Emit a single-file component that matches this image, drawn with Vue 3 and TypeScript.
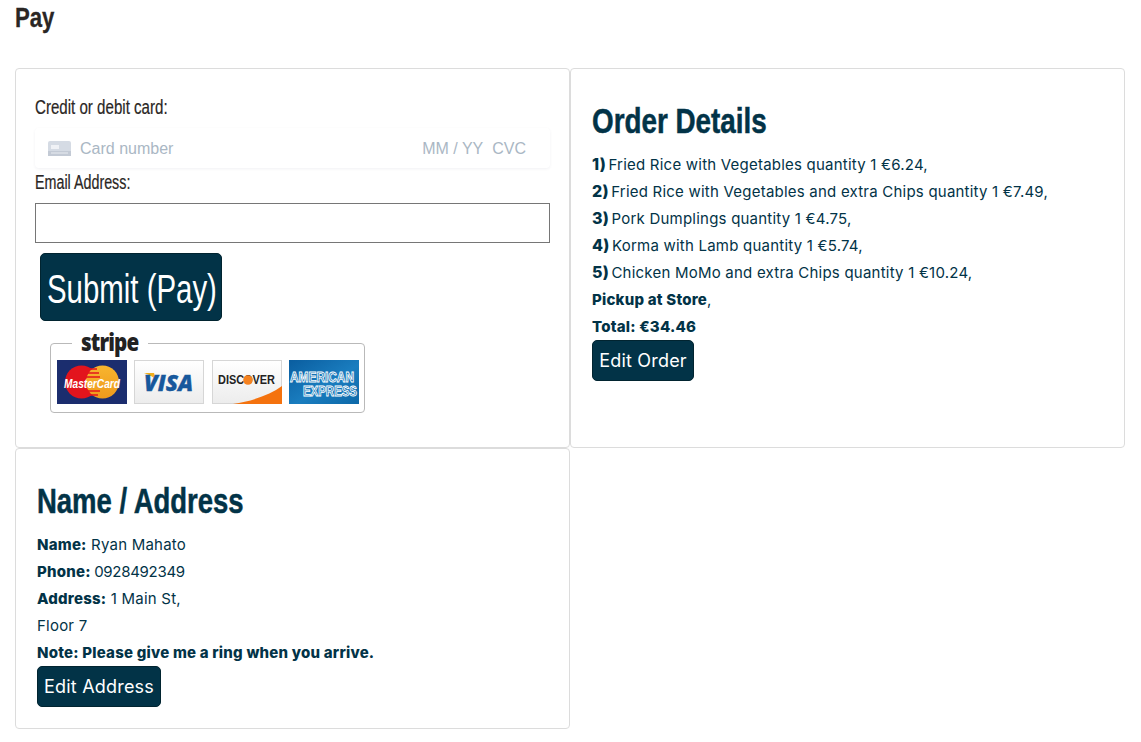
<script setup lang="ts">
interface Item { n: string; text: string }
const items: Item[] = [
  { n: '1)', text: 'Fried Rice with Vegetables quantity 1 €6.24,' },
  { n: '2)', text: 'Fried Rice with Vegetables and extra Chips quantity 1 €7.49,' },
  { n: '3)', text: 'Pork Dumplings quantity 1 €4.75,' },
  { n: '4)', text: 'Korma with Lamb quantity 1 €5.74,' },
  { n: '5)', text: 'Chicken MoMo and extra Chips quantity 1 €10.24,' },
]
</script>

<template>
  <main class="page">
    <h1 class="title"><span class="squeeze s-title">Pay</span></h1>
    <div class="grid">
      <section class="card pay">
        <label class="label first"><span class="squeeze s-credit">Credit or debit card:</span></label>
        <div class="stripe-el">
          <svg class="card-ico" width="23" height="15" viewBox="0 0 23 15">
            <rect x="0" y="0" width="23" height="15" rx="2" fill="#d5dbe4" />
            <rect x="0" y="10" width="23" height="5" fill="#c3cad5" />
            <rect x="3" y="4" width="8" height="4" fill="#f0f2f6" />
            <rect x="3" y="11.5" width="17" height="1" fill="#e9ecf1" />
          </svg>
          <span class="ph num">Card number</span>
          <span class="ph exp">MM / YY</span>
          <span class="ph cvc">CVC</span>
        </div>
        <label class="label second"><span class="squeeze s-email">Email Address:</span></label>
        <input class="email" type="text" />
        <button class="btn submit" type="button"><span class="squeeze s-submit">Submit (Pay)</span></button>
        <div class="badge">
          <span class="stripe-word"><span class="squeeze s-stripe">stripe</span></span>
          <svg width="70" height="44" viewBox="0 0 70 44">
            <defs>
              <linearGradient id="g1" x1="0" y1="0" x2="0" y2="1">
                <stop offset="0" stop-color="#ffffff" />
                <stop offset="1" stop-color="#ececec" />
              </linearGradient>
              <linearGradient id="g2" x1="0" y1="0" x2="0" y2="1">
                <stop offset="0" stop-color="#f8b52e" />
                <stop offset="1" stop-color="#ee9a1c" />
              </linearGradient>
              <linearGradient id="g3" x1="0" y1="0" x2="1" y2="1">
                <stop offset="0" stop-color="#0a5d9f" />
                <stop offset="0.55" stop-color="#1a7dbf" />
                <stop offset="1" stop-color="#0d68a8" />
              </linearGradient>
            </defs>
            <rect width="70" height="44" fill="#1b2d6e" />
            <circle cx="24.5" cy="22" r="16.5" fill="#e3141d" />
            <circle cx="45.5" cy="22" r="16.5" fill="url(#g2)" />
            <path d="M30 9h10M28 13h14M27 17h16M27 31h16M29 35h12" stroke="#e3141d" stroke-width="1.6" />
            <text x="7" y="27.5" textLength="56" lengthAdjust="spacingAndGlyphs" class="mc">MasterCard</text>
          </svg>
          <svg width="70" height="44" viewBox="0 0 70 44">
            <rect x=".5" y=".5" width="69" height="43" fill="url(#g1)" stroke="#d6d6d6" />
            <path d="M10 13h10l3 9q-3-6-13-9z" fill="#f2ae1c" />
            <text x="10" y="31" textLength="49" lengthAdjust="spacingAndGlyphs" class="visa">VISA</text>
          </svg>
          <svg class="third" width="70" height="44" viewBox="0 0 70 44">
            <rect x=".5" y=".5" width="69" height="43" fill="url(#g1)" stroke="#d6d6d6" />
            <path d="M21 44C40 41 58 35 70 26V44Z" fill="#f4720e" />
            <text x="6" y="24" textLength="57" lengthAdjust="spacingAndGlyphs" class="disc">DISCOVER</text>
            <circle cx="36" cy="20" r="4.8" fill="#f58220" />
          </svg>
          <svg width="70" height="44" viewBox="0 0 70 44">
            <rect width="70" height="44" fill="url(#g3)" />
            <text x="1" y="22" textLength="64" lengthAdjust="spacingAndGlyphs" class="amex">AMERICAN</text>
            <text x="14" y="36" textLength="54" lengthAdjust="spacingAndGlyphs" class="amex">EXPRESS</text>
          </svg>
        </div>
      </section>

      <section class="card order">
        <h2 class="heading"><span class="squeeze s-order">Order Details</span></h2>
        <p v-for="i in items" :key="i.n" class="line"><strong class="num-b">{{ i.n }}</strong> {{ i.text }}</p>
        <p class="line"><strong>Pickup at Store</strong>,</p>
        <p class="line"><strong>Total: €34.46</strong></p>
        <button class="btn small w-order" type="button">Edit Order</button>
      </section>

      <section class="card addr">
        <h2 class="heading"><span class="squeeze s-name">Name / Address</span></h2>
        <p class="line"><strong>Name:</strong> Ryan Mahato</p>
        <p class="line"><strong>Phone:</strong> <span class="digits">0928492349</span></p>
        <p class="line"><strong>Address:</strong> 1 Main St,</p>
        <p class="line">Floor 7</p>
        <p class="line"><strong>Note: Please give me a ring when you arrive.</strong></p>
        <button class="btn small w-addr" type="button">Edit Address</button>
      </section>
    </div>
  </main>
</template>

<style scoped>
.page {
  padding: 0 16px 0 15px;
  font-family: Inter, "Noto Sans", sans-serif;
  color: #023347;
}
.squeeze {
  display: inline-block;
  white-space: nowrap;
  transform-origin: left center;
}
.s-title { transform: scaleX(0.82); }
.s-credit { transform: scaleX(0.755); }
.s-email { transform: scaleX(0.715); }
.s-submit { transform: scaleX(0.735); }
.s-order { transform: scaleX(0.795); }
.s-name { transform: scaleX(0.785); }
.s-stripe { transform: scaleX(0.86); }
.title {
  margin: 0;
  height: 68px;
  box-sizing: border-box;
  padding-top: 2px;
  font: 700 27px/32px "Liberation Sans", sans-serif;
  color: #2a2624;
  -webkit-text-stroke: 0.3px #2a2624;
}
.grid {
  display: grid;
  grid-template-columns: 555px 555px;
}
.card {
  box-sizing: border-box;
  border: 1px solid #dcdcdc;
  border-radius: 4px;
}
.pay {
  height: 380px;
  padding: 26px 19px 0;
}
.order {
  height: 380px;
  padding: 29px 21px 0;
}
.addr {
  height: 281px;
  padding: 29px 21px 0;
}
.label {
  display: block;
  font: 400 20px/24px "Liberation Sans", sans-serif;
  color: #2a2624;
  -webkit-text-stroke: 0.2px #2a2624;
}
.second { margin-top: 2px; }
.stripe-el {
  display: flex;
  align-items: center;
  height: 40px;
  margin-top: 9px;
  padding: 1px 24px 0 13px;
  box-sizing: border-box;
  border-radius: 4px;
  box-shadow: 0 1px 3px rgba(50, 50, 93, 0.07);
  background: #fff;
}
.card-ico { margin-right: 9px; }
.ph {
  font: 400 16px/18px "Liberation Sans", Arial, sans-serif;
  color: #aab7c4;
}
.exp { margin-left: auto; }
.cvc { margin-left: 9px; }
.email {
  display: block;
  box-sizing: border-box;
  width: 515px;
  height: 40px;
  margin-top: 9px;
  border: 1px solid #767676;
  background: #fff;
}
.btn {
  display: block;
  border: 1px solid #012430;
  border-radius: 5px;
  background: #023347;
  color: #fff;
}
.submit {
  width: 182px;
  height: 68px;
  margin: 10px 0 0 5px;
  padding: 4px 0 0 6px;
  overflow: visible;
  text-align: left;
  font: 400 40px/1 "Liberation Sans", sans-serif;
  white-space: nowrap;
}
.badge {
  position: relative;
  display: flex;
  gap: 7px;
  box-sizing: border-box;
  width: 315px;
  height: 70px;
  margin: 22px 0 0 15px;
  padding: 16px 0 0 6px;
  border: 1px solid #b9b9b9;
  border-radius: 4px;
}
.third { margin-left: 1px; }
.stripe-word {
  position: absolute;
  top: -16px;
  left: 21px;
  box-sizing: border-box;
  width: 76px;
  padding: 0 0 0 9px;
  background: #fff;
  font: 800 24px/28px "Open Sans", sans-serif;
  letter-spacing: -1px;
  color: #222;
}
.heading {
  margin: 0 0 7px;
  font: 700 35px/46px "Liberation Sans", sans-serif;
  color: #023347;
  -webkit-text-stroke: 0.5px #023347;
}
.line {
  margin: 0;
  font-size: 15px;
  line-height: 27px;
  letter-spacing: 0.22px;
  color: #023347;
}
.line strong { font-weight: 800; }
.num-b { font-size: 16px; margin-right: -2px; }
.digits { letter-spacing: -0.3px; margin-left: -1px; }
.small {
  height: 41px;
  padding: 0;
  font: 400 18px/1 Inter, sans-serif;
  letter-spacing: 0.2px;
}
.w-order { width: 102px; }
.w-addr { width: 124px; }
.mc { font: italic 700 12px "Liberation Sans", sans-serif; fill: #fff; }
.visa { font: italic 800 23px "Open Sans", sans-serif; fill: #17589c; stroke: #17589c; stroke-width: 0.4px; }
.disc { font: 700 13px "Liberation Sans", sans-serif; fill: #222; }
.amex { font: 700 14px "Liberation Sans", sans-serif; fill: #0f6fb2; stroke: #fff; stroke-width: 0.9px; }
</style>
